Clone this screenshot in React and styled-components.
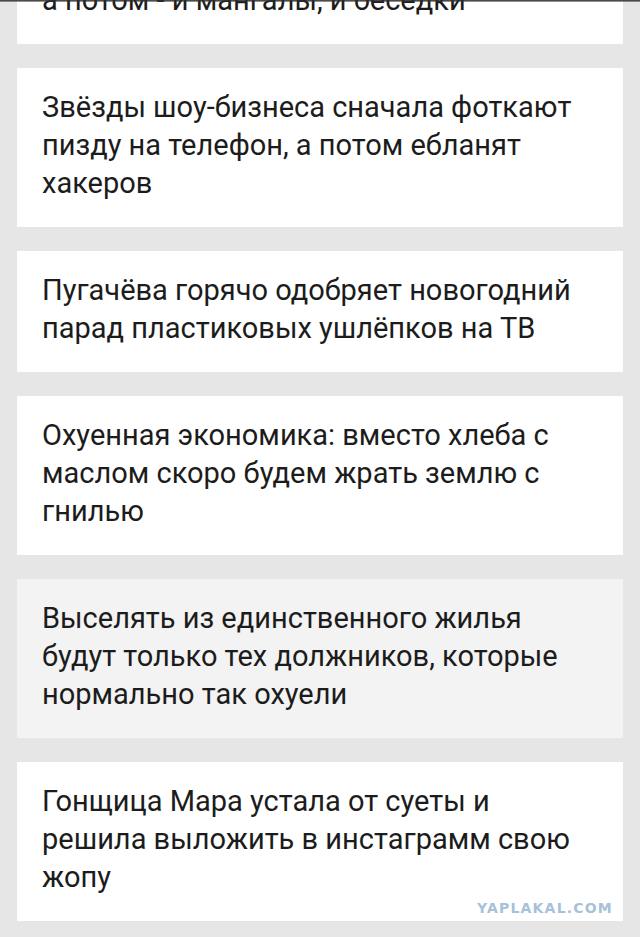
import styled, { createGlobalStyle } from "styled-components";

const GlobalStyle = createGlobalStyle`
  html, body {
    margin: 0;
    padding: 0;
    background: #e6e6e6;
    overflow: hidden;
  }
  body {
    font-family: Roboto, "Noto Sans", sans-serif;
  }
`;

const Page = styled.div`
  position: relative;
  height: 937px;
  overflow: hidden;
  background: #e6e6e6;
`;

// edge of the toolbar that sits above the scrolled list
const TopEdge = styled.div`
  position: absolute;
  top: 0;
  left: 0;
  right: 0;
  height: 2px;
  background: linear-gradient(#2a2a2a, rgba(60, 60, 60, 0.4));
`;

const Feed = styled.div`
  display: flex;
  flex-direction: column;
  gap: 24px;
  padding: 0 17px;
  margin-top: -39px;
`;

const Card = styled.a`
  display: block;
  background: ${({ $visited }) => ($visited ? "#f3f3f3" : "#ffffff")};
  padding: 20px 25px 25px;
  color: #1c1c1c;
  font-size: 29px;
  line-height: 38px;
  text-decoration: none;
`;

const Watermark = styled.div`
  position: absolute;
  right: 27px;
  top: 901px;
  color: #a6c1d8;
  font-family: "DejaVu Sans", sans-serif;
  font-weight: bold;
  font-size: 14px;
  line-height: 14px;
  letter-spacing: 1.2px;
`;

const posts = [
  { text: "а потом - и мангалы, и беседки" },
  {
    text: "Звёзды шоу-бизнеса сначала фоткают пизду на телефон, а потом ебланят хакеров",
  },
  { text: "Пугачёва горячо одобряет новогодний парад пластиковых ушлёпков на ТВ" },
  {
    text: "Охуенная экономика: вместо хлеба с маслом скоро будем жрать землю с гнилью",
  },
  {
    text: "Выселять из единственного жилья будут только тех должников, которые нормально так охуели",
    visited: true,
  },
  {
    text: "Гонщица Мара устала от суеты и решила выложить в инстаграмм свою жопу",
  },
];

const App = () => {
  return (
    <Page>
      <GlobalStyle />
      <Feed>
        {posts.map((post, index) => (
          <Card key={index} $visited={post.visited}>
            {post.text}
          </Card>
        ))}
      </Feed>
      <TopEdge />
      <Watermark>YAPLAKAL.COM</Watermark>
    </Page>
  );
};

export default App;
